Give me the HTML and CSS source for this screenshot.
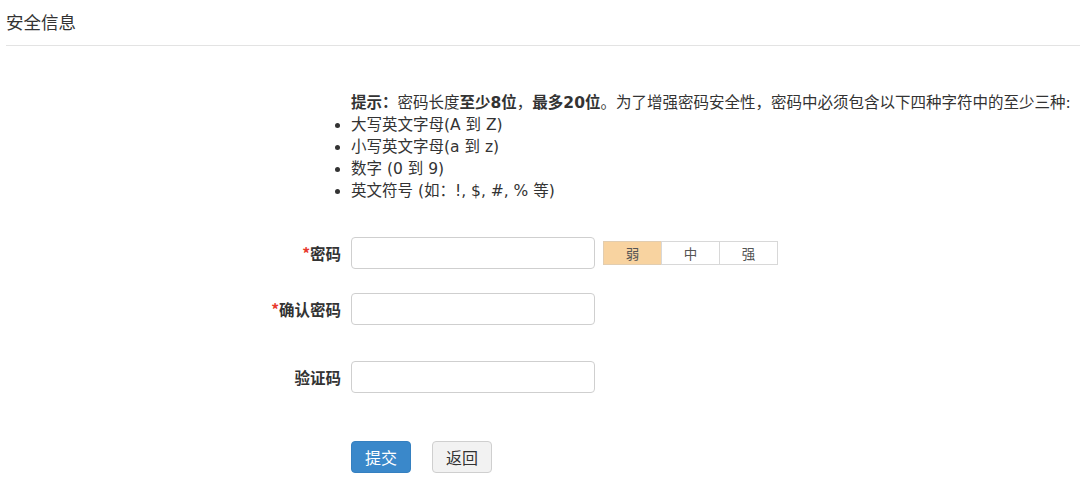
FILE: index.html
```html
<!DOCTYPE html>
<html lang="zh-CN">
<head>
<meta charset="utf-8">
<title>安全信息</title>
<link rel="stylesheet" href="styles.css">
</head>
<body>
<div class="header">安全信息</div>
<div class="hint">
  <p class="hint-title"><b>提示：</b>密码长度<b>至少8位</b>，<b>最多20位</b>。为了增强密码安全性，密码中必须包含以下四种字符中的至少三种:</p>
  <ul class="hint-list">
    <li>大写英文字母(A 到 Z)</li>
    <li>小写英文字母(a 到 z)</li>
    <li>数字 (0 到 9)</li>
    <li>英文符号 (如：!, $, #, % 等)</li>
  </ul>
</div>
<form class="form">
  <div class="row row-pwd">
    <label class="label"><span class="req">*</span>密码</label>
    <input class="input" type="password">
    <div class="strength">
      <span class="cell cell-on">弱</span>
      <span class="cell">中</span>
      <span class="cell">强</span>
    </div>
  </div>
  <div class="row row-confirm">
    <label class="label"><span class="req">*</span>确认密码</label>
    <input class="input" type="password">
  </div>
  <div class="row row-code">
    <label class="label">验证码</label>
    <input class="input" type="text">
  </div>
  <div class="row row-actions">
    <span class="label"></span>
    <button type="button" class="btn btn-primary">提交</button>
    <button type="button" class="btn btn-default">返回</button>
  </div>
</form>
</body>
</html>
```
FILE: styles.css
```css
* { box-sizing: border-box; }
body {
  margin: 0;
  font-family: "DejaVu Sans", "Noto Sans CJK SC", sans-serif;
  color: #333;
  background: #fff;
}
.header {
  margin-left: 6px;
  height: 46px;
  line-height: 44px;
  font-size: 17.5px;
  font-family: "Noto Sans CJK SC", sans-serif;
  border-bottom: 1px solid #e3e3e3;
}
.hint {
  margin: 46px 0 0 351px;
  font-size: 15.5px;
  line-height: 22px;
  font-family: "DejaVu Sans", "Noto Sans CJK SC", sans-serif;
}
.hint p { margin: 0; white-space: nowrap; }
.hint-list {
  margin: 0;
  padding: 0;
  list-style: none;
}
.hint-list li { position: relative; white-space: nowrap; }
.hint-list li::before {
  content: "";
  position: absolute;
  left: -16px;
  top: 9px;
  width: 5px;
  height: 5px;
  border-radius: 50%;
  background: #333;
}
.form { margin-top: 35px; }
.row {
  display: flex;
  align-items: center;
}
.row-confirm { margin-top: 24px; }
.row-code { margin-top: 36px; }
.row-actions { margin-top: 48px; }
.label {
  width: 341px;
  text-align: right;
  font-size: 15.5px;
  font-weight: bold;
  font-family: "Noto Sans CJK SC", sans-serif;
  color: #333;
  margin-right: 10px;
  flex: none;
}
.req { color: #e8392d; font-weight: bold; }
.input {
  width: 244px;
  height: 32px;
  border: 1px solid #cfcfcf;
  border-radius: 4px;
  padding: 0 8px;
  font-size: 14px;
  outline: none;
}
.strength {
  display: flex;
  margin-left: 8px;
  height: 24px;
}
.cell {
  width: 59px;
  height: 24px;
  border: 1px solid #d8d8d8;
  margin-left: -1px;
  font-size: 13.5px;
  line-height: 22px;
  text-align: center;
  color: #555;
  font-family: "Noto Sans CJK SC", sans-serif;
  background: #fff;
}
.cell:first-child { margin-left: 0; }
.cell-on { background: #f8d3a0; border-color: #e2cdb0; }
.btn {
  height: 32px;
  width: 60px;
  border-radius: 4px;
  font-size: 16px;
  font-family: "Noto Sans CJK SC", sans-serif;
  cursor: pointer;
  padding: 0;
}
.btn-primary {
  background: #3a88ca;
  border: 1px solid #3580c0;
  color: #fff;
}
.btn-default {
  margin-left: 21px;
  background: #f2f2f2;
  border: 1px solid #cfcfcf;
  color: #333;
}
```
